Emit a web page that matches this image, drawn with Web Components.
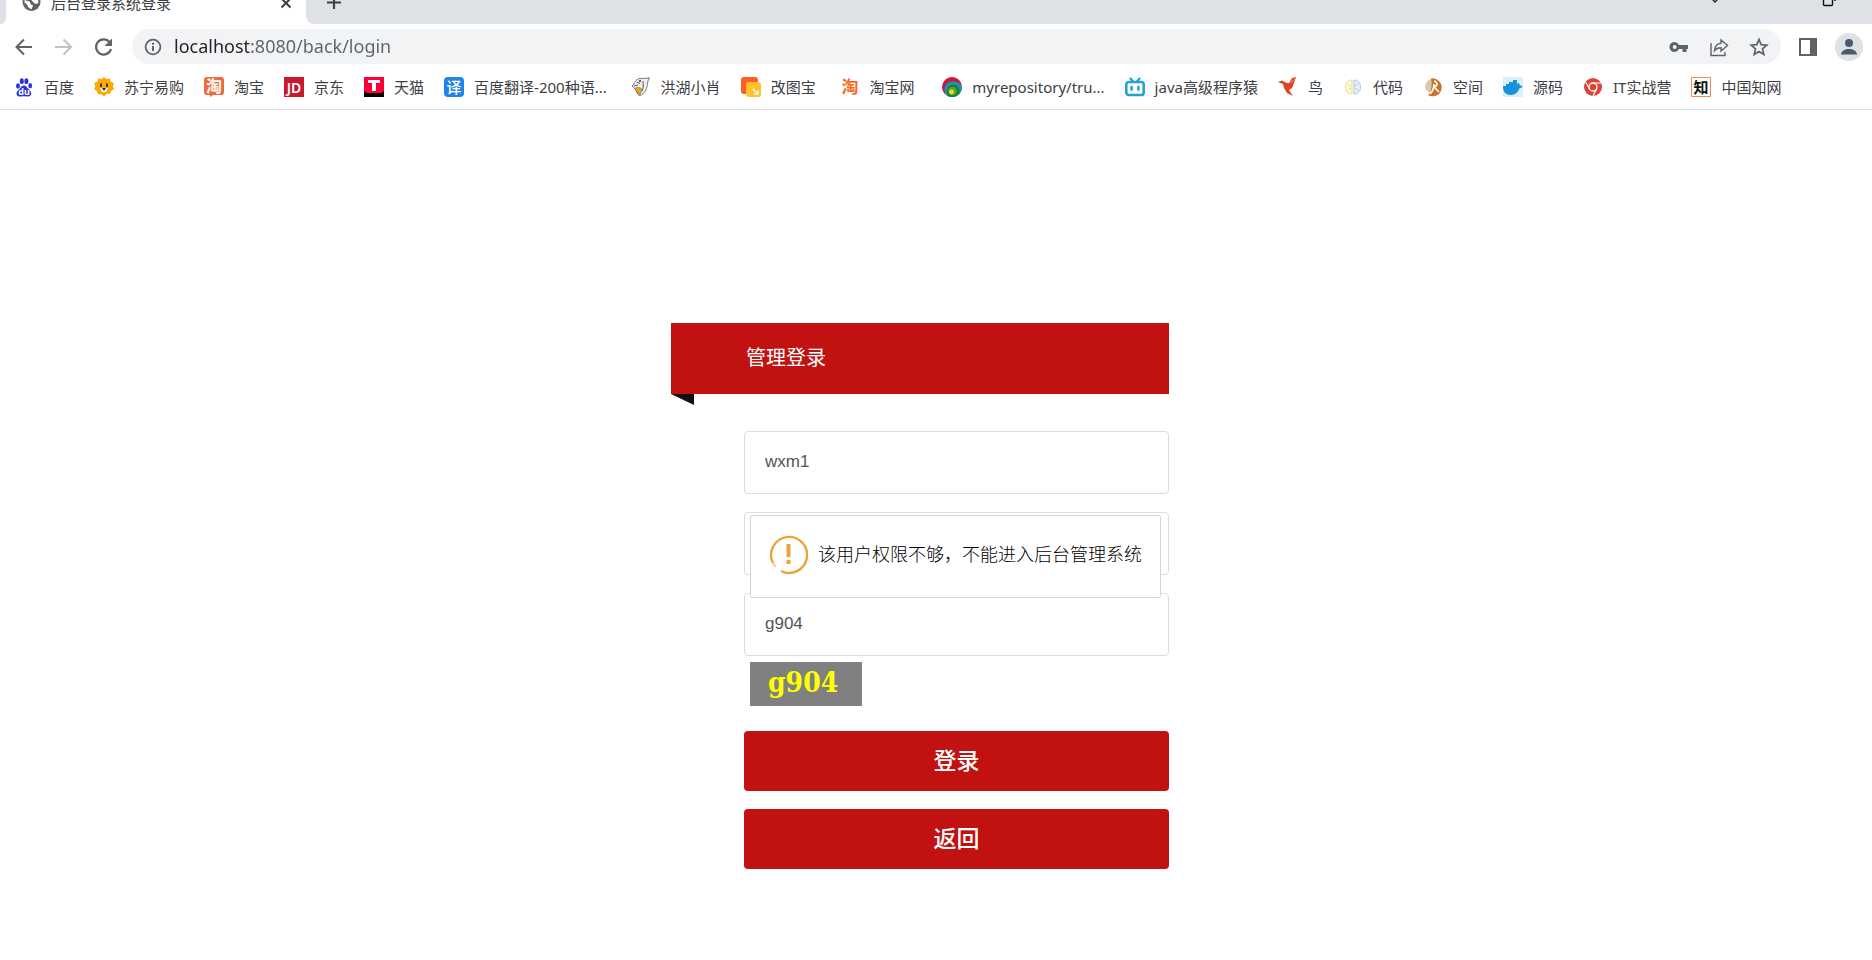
<!DOCTYPE html>
<html lang="zh-CN">
<head>
<meta charset="utf-8">
<title>后台登录系统登录</title>
<style>
  body {
    margin: 0;
    background: #fff;
    color: #3c4043;
    font-family: "Noto Sans", "Noto Sans CJK SC", sans-serif;
  }
</style>
</head>
<body>

<browser-tabs>后台登录系统登录</browser-tabs>
<browser-toolbar host="localhost" path=":8080/back/login"></browser-toolbar>

<bookmark-bar>
  <bookmark-item icon="baidu">百度</bookmark-item>
  <bookmark-item icon="suning">苏宁易购</bookmark-item>
  <bookmark-item icon="taobao">淘宝</bookmark-item>
  <bookmark-item icon="jd">京东</bookmark-item>
  <bookmark-item icon="tmall">天猫</bookmark-item>
  <bookmark-item icon="fanyi">百度翻译-200种语...&nbsp;</bookmark-item>
  <bookmark-item icon="dolphin">洪湖小肖</bookmark-item>
  <bookmark-item icon="gaitu">改图宝&nbsp;</bookmark-item>
  <bookmark-item icon="tao">淘宝网&nbsp;&nbsp;</bookmark-item>
  <bookmark-item icon="repo">myrepository/tru...</bookmark-item>
  <bookmark-item icon="bili">java高级程序猿</bookmark-item>
  <bookmark-item icon="bird">鸟</bookmark-item>
  <bookmark-item icon="brain">代码</bookmark-item>
  <bookmark-item icon="space">空间</bookmark-item>
  <bookmark-item icon="docker">源码</bookmark-item>
  <bookmark-item icon="chrome">IT实战营</bookmark-item>
  <bookmark-item icon="cnki">中国知网</bookmark-item>
</bookmark-bar>

<login-page>
  <login-banner>管理登录</login-banner>
  <login-form>
    <login-field label="用户名" value="wxm1"></login-field>
    <login-field label="密码" type="password"></login-field>
    <login-field label="验证码" value="g904"></login-field>
    <captcha-code>g904</captcha-code>
    <login-button>登录</login-button>
    <login-button>返回</login-button>
    <message-layer slot="layer">该用户权限不够，不能进入后台管理系统</message-layer>
  </login-form>
</login-page>

<script>
const FAVICONS = {
  baidu: `
    <g fill="#2a32d8">
      <ellipse cx="4" cy="9" rx="2" ry="2.700"/>
      <ellipse cx="7.800" cy="4.200" rx="2" ry="2.900"/>
      <ellipse cx="12.400" cy="4.200" rx="2" ry="2.900"/>
      <ellipse cx="16.200" cy="8.600" rx="1.900" ry="2.700"/>
      <path d="M9.800 8.600c2 0 3 1.500 4.200 3 1.700 1.900 3.400 3 3.200 5.100-.2 2.300-2 3-4 2.700-2.200-.3-4.400-.3-6.600 0-2.200.3-4-.5-4.100-2.700-.1-2.200 1.700-3.200 3.300-5 1.200-1.500 2-3.100 4-3.100z"/>
    </g>
    <text x="10" y="17.500" font-size="9" font-weight="700" fill="#fff" text-anchor="middle">du</text>`,
  suning: `
    <path fill="#fcaa0a" d="M10 0l2.600 2 3.300-.6 1 3.100 2.900 1.500-.9 3.200 1.100 3-2.900 1.700-1 3.100-3.300-.2L10 19.500l-2.700-2.200-3.300.2-1-3.100L.2 12.300l1-3.100L.3 6.100l2.900-1.500 1-3.200 3.200.6z"/>
    <path d="M7 6.500v3.500M13 6.500v3.500" stroke="#222" stroke-width="1.700"/>
    <path d="M6 11h8l-2 4H8z" fill="#fff"/>
    <path d="M8 11h4l-2 3z" fill="#222"/>`,
  taobao: `
    <path fill="#f1683a" d="M3 0h14a3 3 0 0 1 3 3v12a3 3 0 0 1-3 3H9l-3 2v-2H3a3 3 0 0 1-3-3V3a3 3 0 0 1 3-3z"/>
    <text x="10" y="15" font-size="16" font-weight="700" fill="#fff" text-anchor="middle">淘</text>`,
  jd: `
    <path fill="#c8192d" d="M0 0h20v20H0z"/>
    <text x="10" y="15.500" font-size="14" font-weight="600" fill="#fff" text-anchor="middle">JD</text>`,
  tmall: `
    <path fill="#000" d="M0 0h20v20H0z"/>
    <path fill="#ff0036" d="M0 0h20v14l-3 2H3l-3-2z"/>
    <path fill="#fff" d="M4 3h12v3h-4v8H8V6H4z"/>`,
  fanyi: `
    <rect width="20" height="20" rx="4" fill="#2185e8"/>
    <text x="10" y="15.500" font-size="15" font-weight="500" fill="#fff" text-anchor="middle">译</text>`,
  dolphin: `
    <path d="M1 9C4 7 4 2 9 1.500c3-.4 6 .5 9.500-.8-1 1.800-1.500 3-1.800 4.500C16.500 11 14 17 9 18.500c-2-.5-3-2-3.500-4.500C4 11.500 2.500 10.500 1 9z" fill="#eee" stroke="#777"/>
    <path d="M4 11.500c2-1.500 5-1.500 7 1l-2 5-3-2z" fill="#e9a51b" stroke="#765" stroke-width=".7"/>
    <path d="M6 5l3 1.500M12 4c0 4 1 6-1 10M3 9l4-1" fill="none" stroke="#555"/>
    <circle cx="9" cy="4" r="1" fill="#333"/>`,
  gaitu: `
    <rect width="17" height="17" rx="3" fill="#ff5c29"/>
    <rect x="5" y="5" width="15" height="15" rx="3" fill="#ffc12c"/>
    <path d="M12 12l5 5m0-4v4h-4" fill="none" stroke="#fff" stroke-width="1.300"/>`,
  tao: `<text x="10" y="16" font-size="17" font-weight="700" fill="#f76b1f" text-anchor="middle">淘</text>`,
  repo: `
    <circle cx="10" cy="10" r="10" fill="#c9183a"/>
    <path d="M4 18C1 12 3 5 10 4.500c5-.3 9 2 10 5.500a10 10 0 0 1-16 8z" fill="#1b95b5"/>
    <path d="M6 19C3 13 6 7.500 11 7.500c5 0 7.500 4 6.500 9A10 10 0 0 1 6 19z" fill="#168039"/>
    <circle cx="10.500" cy="14" r="4.300" fill="#58a52c"/>
    <circle cx="9.500" cy="15" r="2.400" fill="#e3df25"/>`,
  bili: `
    <path d="M5.500 1.500l2.500 3M14.500 1.500l-2.500 3" stroke="#20a5d3" stroke-width="2.200" stroke-linecap="round"/>
    <rect x="1.300" y="5" width="17.400" height="13" rx="2.600" fill="#fff" stroke="#20a5d3" stroke-width="2.600"/>
    <path d="M6.600 10v2.600M13.400 10v2.600" stroke="#20a5d3" stroke-width="2.600" stroke-linecap="round"/>`,
  bird: `
    <path d="M0 5l4-1.500 3 1.700 4 1L14 1l4-1-2 6-2 5-3 2 4 6-6-3-3-5-1-4-3-1z" fill="#e24327"/>
    <path d="M11 6.200L18 0l-3.500 5.500z" fill="#f4744f"/>`,
  brain: `
    <path d="M9 3C5 3 2.500 6 2.500 10S5 17 9 17z" fill="#fdfbd9" stroke="#e6df8c"/>
    <path d="M11 3c4 0 6.500 3 6.500 7S15 17 11 17z" fill="#e8f1fb" stroke="#a9c5e3"/>
    <path d="M5 8l3 1m-3 4l3-2" stroke="#e6df8c"/>
    <path d="M15 7l-3 2m3 4l-3-2" stroke="#a9c5e3"/>`,
  space: `
    <path d="M8 2v14a8 8 0 0 1-6-6A9 9 0 0 1 8 2z" fill="#d8cbb0"/>
    <path d="M8 1.500A9 9 0 1 1 5 18c3-2 4-7 3-16.500z" fill="#cb7329"/>
    <path d="M11 4c4 1 4 5 0 6l5 5M7 17c3-3 4-6 4-10" fill="none" stroke="#fff" stroke-width="1.600"/>`,
  docker: `
    <path fill="#dceefa" d="M0 0h20v20H0z"/>
    <path fill="#1693da" d="M0 9h3V7h3V5h4V3h4v5c.6-1.500 1-2 1.800-2.200L17 8.500l2.500.4c-.4 1.500-1.500 2.200-3 2.300C15 15.500 12 18 7.500 18 3 18 .5 15 0 11z"/>`,
  chrome: `
    <circle cx="10" cy="10" r="9" fill="#db4437"/>
    <circle cx="10" cy="10" r="4" fill="none" stroke="#fff" stroke-width="1.300"/>
    <path d="M10 6h8M6.500 12L3 5.500M13.500 12L10 19" stroke="#fff" stroke-width="1.200"/>`,
  cnki: `
    <path d="M.5.5h19v19H.5z" fill="#fff" stroke="#ef8b55"/>
    <text x="10" y="15.500" font-size="15" font-weight="700" fill="#111" text-anchor="middle">知</text>`
};

class BrowserTabs extends HTMLElement {

  constructor() {
    super();

    const shadowRoot = this.attachShadow({mode: 'open'});

    shadowRoot.innerHTML = `
            <style>
              :host {
                display: flex;
                height: 24px;
                overflow: hidden;
                background: #dee1e6;
              }
              .edge {
                width: 6px;
                background: #fff;
              }
              .edge i, .rest {
                display: block;
                height: 100%;
                background: #dee1e6;
              }
              .edge i {
                border-bottom-right-radius: 8px;
              }
              .tab {
                display: flex;
                align-items: flex-end;
                box-sizing: border-box;
                width: 300px;
                padding: 0 14px 0 16px;
                background: #fff;
              }
              .title {
                flex: 1;
                margin-left: 10px;
                font-size: 15px;
                line-height: 20px;
                padding-bottom: 11px;
                white-space: nowrap;
              }
              .wrap {
                flex: 1;
                background: #fff;
              }
              .rest {
                display: flex;
                align-items: flex-end;
                justify-content: space-between;
                box-sizing: border-box;
                padding: 0 36px 0 20px;
                border-bottom-left-radius: 8px;
              }
              button {
                display: block;
                padding: 0;
                border: 0;
                background: none;
              }
              .tab svg, .rest svg {
                display: block;
                margin-bottom: 12px;
              }
              .window {
                display: flex;
                gap: 100px;
              }
            </style>

            <div class="edge"><i></i></div>
            <div class="tab">
              <svg width="19" height="20" viewBox="0 0 19 20">
                <circle cx="9.500" cy="10" r="9" fill="#5f6368"/>
                <path d="M2.500 8l5 1.500 1.500 3 2 1-1.500 4-3-2-1.500-3-2.500-2zM11 3l5 3 .5 5-3 1-3-2.500-2-3z" fill="#fff"/>
              </svg>
              <span class="title"><slot></slot></span>
              <button aria-label="关闭">
                <svg width="12" height="20" viewBox="0 0 12 20">
                  <path d="M1.500 6.500l9 9M10.500 6.500l-9 9" stroke="#3c4043" stroke-width="2"/>
                </svg>
              </button>
            </div>
            <div class="wrap">
              <div class="rest">
                <button aria-label="新标签页">
                  <svg width="16" height="20" viewBox="0 0 16 20">
                    <path d="M8 3v14M1 10.500h14" stroke="#3c4043" stroke-width="2.200"/>
                  </svg>
                </button>
                <div class="window">
                  <button aria-label="搜索标签页">
                    <svg width="14" height="20" viewBox="0 0 14 20">
                      <path d="M3 6l4 4 4-4" fill="none" stroke="#222" stroke-width="1.400"/>
                    </svg>
                  </button>
                  <button aria-label="还原">
                    <svg width="14" height="20" viewBox="0 0 14 20">
                      <path d="M1.500 2v10.500a1 1 0 0 0 1 1h7a1 1 0 0 0 1-1V2M13 2v7" fill="none" stroke="#111" stroke-width="1.400"/>
                    </svg>
                  </button>
                </div>
              </div>
            </div>
        `;
  }

}

class BrowserToolbar extends HTMLElement {

  constructor() {
    super();

    const shadowRoot = this.attachShadow({mode: 'open'});

    shadowRoot.innerHTML = `
            <style>
              :host {
                display: flex;
                align-items: center;
                gap: 18px;
                padding: 5px 9px 4px 14px;
              }
              nav {
                display: flex;
                gap: 20px;
              }
              button {
                display: block;
                padding: 0;
                border: 0;
                background: none;
              }
              svg {
                display: block;
              }
              .address {
                flex: 1;
                display: flex;
                align-items: center;
                gap: 20px;
                height: 35px;
                padding: 0 12px 0 11px;
                border-radius: 18px;
                background: #f1f3f4;
              }
              input {
                flex: 1;
                min-width: 0;
                margin-left: -9px;
                padding: 0 0 2px;
                border: 0;
                outline: 0;
                font: 18px/24px "Noto Sans", sans-serif;
                color: transparent;
                background: linear-gradient(90deg, #202124 var(--host-width), #5f6368 var(--host-width));
                -webkit-background-clip: text;
                background-clip: text;
              }
              .avatar {
                border-radius: 50%;
                background: #dee1e6;
              }
            </style>

            <nav>
              <button aria-label="后退">
                <svg width="20" height="20" viewBox="0 0 20 20">
                  <path d="M18 10H3M10 2.500L2.500 10l7.500 7.500" fill="none" stroke="#5f6368" stroke-width="2"/>
                </svg>
              </button>
              <button aria-label="前进">
                <svg width="20" height="20" viewBox="0 0 20 20">
                  <path d="M1 10h16M9.500 2.500L17 10l-7.500 7.500" fill="none" stroke="#bfc1c4" stroke-width="2"/>
                </svg>
              </button>
              <button aria-label="重新加载">
                <svg width="20" height="20" viewBox="0 0 20 20">
                  <path d="M15.500 5A7.600 7.600 0 1 0 17 12" fill="none" stroke="#5f6368" stroke-width="2.200"/>
                  <path d="M18 1.500v7.500h-7.500z" fill="#5f6368"/>
                </svg>
              </button>
            </nav>

            <div class="address">
              <svg width="20" height="20" viewBox="0 0 20 20">
                <circle cx="10" cy="10" r="7.400" fill="none" stroke="#5f6368" stroke-width="1.800"/>
                <path d="M10 9v5M10 5.800v2" stroke="#5f6368" stroke-width="2"/>
              </svg>
              <input type="text" aria-label="地址栏">
              <button aria-label="密码">
                <svg width="20" height="20" viewBox="0 0 20 20">
                  <path fill="#5f6368" fill-rule="evenodd" d="M10 8h9v4h-1.500v3h-4v-3H10A5 5 0 1 1 10 8zM5.700 8a2 2 0 1 0 0 4 2 2 0 0 0 0-4z"/>
                </svg>
              </button>
              <button aria-label="分享">
                <svg width="20" height="20" viewBox="0 0 20 20">
                  <path d="M2 6v12.500h14V15M5.500 13.500C6 9 8 6.500 12 6.200V3l6.500 5.500L12 14v-3.300c-3 0-5 .8-6.500 2.800z" fill="none" stroke="#5f6368" stroke-width="1.400"/>
                </svg>
              </button>
              <button aria-label="为此标签页添加书签">
                <svg width="20" height="20" viewBox="0 0 20 20">
                  <path d="M10 2.500l2.200 5.200 5.600.5-4.300 3.700 1.300 5.500-4.800-2.900-4.800 2.900 1.300-5.500-4.300-3.700 5.600-.5z" fill="none" stroke="#5f6368" stroke-width="1.700"/>
                </svg>
              </button>
            </div>

            <button aria-label="侧边栏" class="panel">
              <svg width="18" height="18" viewBox="0 0 18 18">
                <path d="M1 1h16v16H1z" fill="none" stroke="#5f6368" stroke-width="2"/>
                <path d="M11 1h6v16h-6z" fill="#5f6368"/>
              </svg>
            </button>
            <button aria-label="用户" class="avatar">
              <svg width="28" height="28" viewBox="0 0 28 28">
                <circle cx="14" cy="10" r="4" fill="#4b5a6b"/>
                <path d="M6 21.500c0-7.500 16-7.500 16 0z" fill="#4b5a6b"/>
              </svg>
            </button>
        `;

    this.input = this.shadowRoot.querySelector('input');
  }

  connectedCallback() {
    const host = this.getAttribute('host');

    this.input.value = host + this.getAttribute('path');

    // the host part is drawn darker than the rest of the address
    const context = document.createElement('canvas').getContext('2d');
    context.font = '18px "Noto Sans"';
    this.input.style.setProperty('--host-width', `${Math.round(context.measureText(host).width)}px`);
  }

}

class BookmarkBar extends HTMLElement {

  constructor() {
    super();

    const shadowRoot = this.attachShadow({mode: 'open'});

    shadowRoot.innerHTML = `
            <style>
              :host {
                display: flex;
                align-items: center;
                gap: 20px;
                height: 41px;
                box-sizing: border-box;
                padding: 0 14px 3px;
                overflow: hidden;
              }
            </style>

            <slot></slot>
        `;
  }

}

class BookmarkItem extends HTMLElement {

  constructor() {
    super();

    const shadowRoot = this.attachShadow({mode: 'open'});

    shadowRoot.innerHTML = `
            <style>
              :host {
                display: block;
                flex: none;
              }
              a {
                display: flex;
                align-items: center;
                gap: 10px;
                color: inherit;
                font-size: 15px;
                line-height: 24px;
                text-decoration: none;
                white-space: nowrap;
              }
              svg {
                overflow: visible;
              }
            </style>

            <a href="#">
              <svg width="20" height="20" viewBox="0 0 20 20"></svg>
              <span><slot></slot></span>
            </a>
        `;
  }

  connectedCallback() {
    this.shadowRoot.querySelector('svg').innerHTML = FAVICONS[this.getAttribute('icon')];
  }

}

class LoginPage extends HTMLElement {

  constructor() {
    super();

    const shadowRoot = this.attachShadow({mode: 'open'});

    shadowRoot.innerHTML = `
            <style>
              :host {
                display: flex;
                justify-content: center;
                border-top: 1px solid #dadce0;
                padding: 213px 0 48px 41px;
                font-family: "Liberation Sans", "Noto Sans CJK SC", sans-serif;
                font-weight: 300;
              }
              main {
                width: 425px;
              }
            </style>

            <main><slot></slot></main>
        `;
  }

}

class LoginBanner extends HTMLElement {

  constructor() {
    super();

    const shadowRoot = this.attachShadow({mode: 'open'});

    shadowRoot.innerHTML = `
            <style>
              :host {
                display: block;
                margin-left: -73px;
              }
              h1 {
                margin: 0;
                padding-left: 75px;
                background: #c11111;
                color: #fff;
                font-size: 20px;
                font-weight: 400;
                line-height: 71px;
              }
              .fold {
                width: 23px;
                height: 11px;
                background: #111;
                clip-path: polygon(0 0, 100% 0, 100% 100%);
              }
            </style>

            <h1><slot></slot></h1>
            <div class="fold"></div>
        `;
  }

}

class LoginForm extends HTMLElement {

  constructor() {
    super();

    const shadowRoot = this.attachShadow({mode: 'open'});

    shadowRoot.innerHTML = `
            <style>
              :host {
                display: block;
                position: relative;
                margin-top: 26px;
              }
              form {
                display: flex;
                flex-direction: column;
                gap: 18px;
              }
            </style>

            <form><slot></slot></form>
            <slot name="layer"></slot>
        `;
  }

}

class LoginField extends HTMLElement {

  constructor() {
    super();

    const shadowRoot = this.attachShadow({mode: 'open'});

    shadowRoot.innerHTML = `
            <style>
              :host {
                display: block;
              }
              input {
                display: block;
                box-sizing: border-box;
                width: 100%;
                height: 63px;
                padding: 0 20px 2px;
                border: 1px solid #dcdcdc;
                border-radius: 4px;
                outline: 0;
                background: #fff;
                color: #555;
                font: 17px "Liberation Sans", sans-serif;
              }
            </style>

            <input>
        `;

    this.input = this.shadowRoot.querySelector('input');
  }

  connectedCallback() {
    this.input.type = this.getAttribute('type') || 'text';
    this.input.value = this.getAttribute('value') || '';
    this.input.setAttribute('aria-label', this.getAttribute('label'));
  }

}

class CaptchaCode extends HTMLElement {

  constructor() {
    super();

    const shadowRoot = this.attachShadow({mode: 'open'});

    shadowRoot.innerHTML = `
            <style>
              :host {
                display: block;
                box-sizing: border-box;
                width: 112px;
                margin: -12px 0 7px 6px;
                padding: 0 18px 2px;
                background: #808080;
                color: #ff0;
                font: 700 28px/42px "DejaVu Serif Condensed", "DejaVu Serif", serif;
              }
            </style>

            <slot></slot>
        `;
  }

}

class LoginButton extends HTMLElement {

  constructor() {
    super();

    const shadowRoot = this.attachShadow({mode: 'open'});

    shadowRoot.innerHTML = `
            <style>
              :host {
                display: block;
              }
              button {
                display: block;
                width: 100%;
                height: 60px;
                padding: 0 0 5px;
                border: 0;
                border-radius: 4px;
                background: #c11111;
                color: #fff;
                font: 500 23px "Noto Sans CJK SC", sans-serif;
              }
            </style>

            <button type="button"><slot></slot></button>
        `;
  }

}

class MessageLayer extends HTMLElement {

  constructor() {
    super();

    const shadowRoot = this.attachShadow({mode: 'open'});

    shadowRoot.innerHTML = `
            <style>
              :host {
                position: absolute;
                top: 84px;
                left: 6px;
                right: 8px;
                display: flex;
                align-items: center;
                gap: 10px;
                padding: 19px 18px 23px;
                border: 1px solid #d3d4d3;
                border-radius: 2px;
                background: #fff;
                color: #000;
                font-size: 18px;
                line-height: 24px;
                white-space: nowrap;
              }
              svg {
                flex: none;
              }
            </style>

            <svg width="39" height="39" viewBox="0 0 39 39">
              <path d="M12 36A18 18 0 1 0 4 28" fill="none" stroke="#eda338" stroke-width="2.400"/>
              <path d="M4 28A18 18 0 0 0 7 32" fill="none" stroke="#f3c583" stroke-width="1.600"/>
              <path d="M19.500 9v13M19.500 25v4" stroke="#eda338" stroke-width="4"/>
            </svg>
            <span><slot></slot></span>
        `;
  }

}

customElements.define('browser-tabs', BrowserTabs);
customElements.define('browser-toolbar', BrowserToolbar);
customElements.define('bookmark-bar', BookmarkBar);
customElements.define('bookmark-item', BookmarkItem);
customElements.define('login-page', LoginPage);
customElements.define('login-banner', LoginBanner);
customElements.define('login-form', LoginForm);
customElements.define('login-field', LoginField);
customElements.define('captcha-code', CaptchaCode);
customElements.define('login-button', LoginButton);
customElements.define('message-layer', MessageLayer);
</script>
</body>
</html>
